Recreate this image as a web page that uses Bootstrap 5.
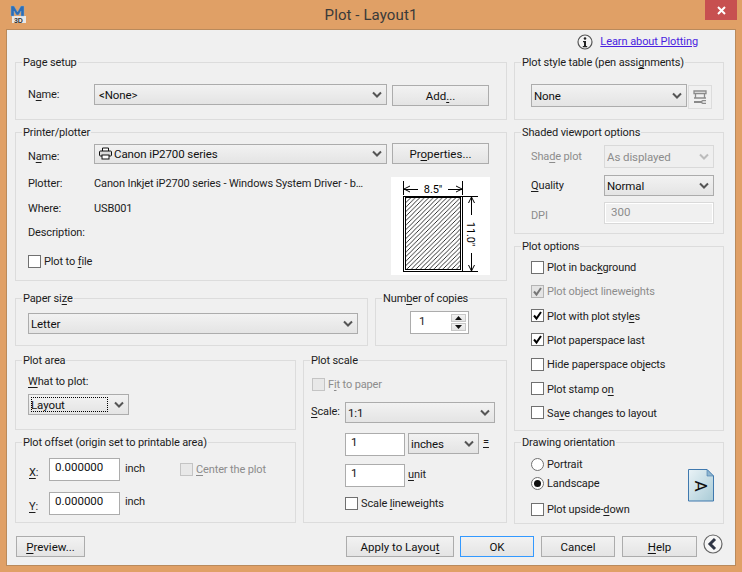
<!DOCTYPE html>
<html lang="en">
<head>
<meta charset="utf-8">
<title>Plot - Layout1</title>
<link href="https://cdn.jsdelivr.net/npm/bootstrap@5.3.0/dist/css/bootstrap.min.css" rel="stylesheet">
<style>
html,body{margin:0;height:572px;overflow:hidden}
body{width:742px;background:#E0A066;font:11px/16px Roboto,"Liberation Sans",sans-serif;letter-spacing:-.13px;color:#1c1c1c}
u{text-underline-offset:2px}
.wtitle{height:29px}
.wlogo{width:37px;padding:5px 0 0 10px}
.wname{font-size:15px;line-height:30px;color:#3a3a3a;letter-spacing:.1px}
.wclose{width:32px;height:20px;background:#C75050;margin-right:5px}
.dlg{margin-left:6px;width:730px;height:537px;background:#F0F0F0;border:1px solid #B98A5C;overflow:hidden}
.lnkrow{height:24px;padding-right:37px;gap:7px}
.lnk{color:#4A1FE0;text-decoration:underline;letter-spacing:-.07px}
.cols{padding-left:8px;gap:7px}
.wleft{width:492px}
.wright{width:210px}
fieldset.grp{border:1px solid #DCDCDC;min-width:0;padding:0 0 0 12px}
.grp legend{float:none;width:auto;font-size:11px;height:16px;line-height:18px;padding:0 1px;margin:0 0 0 -6px;letter-spacing:-.13px}
.lab{flex:none}
.sel{height:21px;font-size:11.5px;line-height:16px;padding:0 0 0 2px;letter-spacing:-.1px;border-radius:0;border:1px solid #ACACAC;color:#111;background:url("data:image/svg+xml,%3Csvg xmlns='http://www.w3.org/2000/svg' viewBox='0 0 10 8'%3E%3Cpath d='M1 1.500l4 4 4-4' fill='none' stroke='%23555' stroke-width='2'/%3E%3C/svg%3E") right 4px center/10px 8px no-repeat,linear-gradient(#F2F2F2,#E4E4E4)}
.sel:disabled{background:url("data:image/svg+xml,%3Csvg xmlns='http://www.w3.org/2000/svg' viewBox='0 0 10 8'%3E%3Cpath d='M1 1.500l4 4 4-4' fill='none' stroke='%23bbb' stroke-width='2'/%3E%3C/svg%3E") right 4px center/10px 8px no-repeat,#EFEFEF;border-color:#D9D9D9;color:#8C8C8C}
.txt{height:23px;font-size:11.5px;line-height:16px;padding:0 0 5px 5px;border-radius:0;border:1px solid #ACACAC;color:#111;background:#fff}
.txt:disabled{background:#F0F0F0;border:2px solid #fff;outline:1px solid #D9D9D9;outline-offset:-1px;color:#8C8C8C;opacity:1;padding-bottom:3px}
.wbtn{height:21px;font-size:11.5px;line-height:16px;padding:0;border-radius:0;border:1px solid #ACACAC;color:#111;background:linear-gradient(#F2F2F2,#E4E4E4)}
.wbtn-ok{border-color:#3399FF}
.dim{color:#8C8C8C}
.chk{height:16px;gap:3px}
.chk .form-check-input{width:13px;height:13px;margin:0;border:1px solid #707070;border-radius:0;background-color:#fff;flex:none;opacity:1}
.chk .form-check-input:checked[type=checkbox]{background-color:#fff;border-color:#707070;background-size:11px;background-image:url("data:image/svg+xml,%3Csvg xmlns='http://www.w3.org/2000/svg' viewBox='0 0 11 11'%3E%3Cpath d='M2 5.500l2.500 3L9 2' fill='none' stroke='%23000' stroke-width='2'/%3E%3C/svg%3E")}
.chk .form-check-input:disabled{border-color:#C4C4C4;background-color:#E8E8E8}
.chk .form-check-input:checked:disabled[type=checkbox]{border-color:#B4B4B4;background-color:#E4E4E4;background-image:url("data:image/svg+xml,%3Csvg xmlns='http://www.w3.org/2000/svg' viewBox='0 0 11 11'%3E%3Cpath d='M2 5.500l2.500 3L9 2' fill='none' stroke='%23777' stroke-width='2'/%3E%3C/svg%3E")}
.chk .form-check-input[type=radio]{border-radius:50%}
.chk .form-check-input:checked[type=radio]{background-color:#fff;border-color:#707070;background-size:13px;background-image:url("data:image/svg+xml,%3Csvg xmlns='http://www.w3.org/2000/svg' viewBox='0 0 13 13'%3E%3Ccircle cx='6.500' cy='6.500' r='3.500' fill='%23111'/%3E%3C/svg%3E")}
.chk .form-check-label{opacity:1!important;height:16px;line-height:18px}
.h-ps{height:66px}.h-pr{height:157px}.h-pa{height:56px}.h-ar{height:78px}.h-of{height:89px}.h-sc{height:171px}.h-sh{height:110px}.h-op{height:193px}.h-or{height:90px}
.dl{position:absolute;left:3px;top:3px;width:77px;height:15px;border:1px dotted #000;pointer-events:none}
.spin{width:59px;height:23px;border:1px solid #ACACAC;background:#fff;padding:1px 1px 2px 8px;margin-left:34px;font-size:11.5px}
.spbtn{width:15px;height:9px;background:linear-gradient(#F2F2F2,#E4E4E4);border:1px solid #C8C8C8}
.spcol{margin:1px 1px 0 0}
.ptico{position:absolute;left:5px;top:3px}
.tool{width:24px;height:24px;border:1px solid #DCDCDC;margin-top:1px}
.pvw{width:99px;height:98px;flex:none;background:#fff}
.bar{padding:12px 12px 0 9px}
.mt-1p{margin-top:1px}.mt-3p{margin-top:3px}.mt-4p{margin-top:4px}.mt-5p{margin-top:5px}.mt-6p{margin-top:6px}.mt-7p{margin-top:7px}.mt-8p{margin-top:8px}.mt-9p{margin-top:9px}.mt-10p{margin-top:10px}.mt-11p{margin-top:11px}.mt-12p{margin-top:12px}.mt-13p{margin-top:13px}.mt-14p{margin-top:14px}
</style>
</head>
<body>
<header class="wtitle d-flex">
  <div class="wlogo">
    <svg width="17" height="18" viewBox="0 0 17 18"><rect x="2" y="11" width="14" height="7" fill="#E8E8E8"/><path d="M1 11V1h3l3.500 6L11 1h3v10h-3V6L8.500 10h-2L4 6v5z" fill="#2E6DB4" stroke="#7FB0DC" stroke-width=".4"/><text x="4" y="17.500" font-size="7" font-weight="700" fill="#333" font-family="Liberation Sans">3D</text></svg>
  </div>
  <div class="wname flex-grow-1 text-center">Plot - Layout1</div>
  <div class="wclose d-flex align-items-center justify-content-center">
    <svg width="9" height="9" viewBox="0 0 9 9"><path d="M1 1l7 7M8 1L1 8" stroke="#fff" stroke-width="2"/></svg>
  </div>
</header>
<main class="dlg">
  <div class="lnkrow d-flex justify-content-end align-items-center">
    <svg width="16" height="16" viewBox="0 0 16 16"><circle cx="8" cy="8" r="7" fill="#F4F4F4" stroke="#555" stroke-width="1.200"/><circle cx="8" cy="4.500" r="1.300" fill="#222"/><path d="M6 7h3v5h1.200v1.200H5.800V12H7V8.200H6z" fill="#222"/></svg>
    <a class="lnk" href="#">Learn about Plotting</a>
  </div>
  <div class="cols d-flex">
    <div class="wleft">
      <fieldset class="grp h-ps">
        <legend>Page setup</legend>
        <div class="d-flex mt-14p">
          <div class="lab" style="width:66px;padding-top:3px">N<u>a</u>me:</div>
          <select class="form-select sel" style="width:293px;padding-left:4px"><option>&lt;None&gt;</option></select>
          <button class="btn wbtn ms-auto mt-1p" style="width:97px;margin-right:17px;flex:none">Add<u>.</u>..</button>
        </div>
      </fieldset>
      <fieldset class="grp h-pr mt-4p">
        <legend>Printer/plotter</legend>
        <div class="d-flex mt-3p">
          <div class="lab" style="width:66px;padding-top:6px">N<u>a</u>me:</div>
          <div class="position-relative mt-1p" style="width:293px;flex:none">
            <select class="form-select sel" style="height:20px;padding-left:19px"><option>Canon iP2700 series</option></select>
            <svg class="ptico" width="13" height="13" viewBox="0 0 13 13"><path d="M3.500 4V1h6v3" fill="#fff" stroke="#111"/><rect x=".5" y="4" width="12" height="5" rx="1" fill="#ddd" stroke="#111"/><rect x="3" y="8" width="7" height="4" fill="#fff" stroke="#111"/></svg>
          </div>
          <button class="btn wbtn" style="width:97px;margin-left:5px;flex:none">Pr<u>o</u>perties...</button>
        </div>
        <div class="d-flex mt-11p">
          <div style="width:350px;flex:none">
            <div class="d-flex"><div class="lab" style="width:66px">Plotter:</div><div class="text-nowrap">Canon Inkjet iP2700 series - Windows System Driver - b…</div></div>
            <div class="d-flex mt-9p"><div class="lab" style="width:66px">Where:</div><div>USB001</div></div>
            <div class="mt-8p">Description:</div>
            <div class="chk d-flex align-items-center mt-12p"><input class="form-check-input" type="checkbox" id="c0"><label class="form-check-label" for="c0">Plot to <u>f</u>ile</label></div>
          </div>
          <svg class="pvw mt-1p" viewBox="0 0 99 98" style="margin-left:13px" shape-rendering="crispEdges">
            <defs><pattern id="hatch" width="4.500" height="4.500" patternUnits="userSpaceOnUse"><path d="M0 4.500L4.500 0" stroke="#000" stroke-width=".8" shape-rendering="auto"/></pattern></defs>
            <rect x="12.500" y="19.500" width="59" height="75" fill="#fff" stroke="#000"/>
            <rect x="14.500" y="20.500" width="55" height="72" fill="url(#hatch)" stroke="#000"/>
            <path d="M12.500 4v14M71.500 4v14M13 12h14M57 12h14M71 19.500h16M71 94.500h16M80.500 20v18M80.500 76v18" fill="none" stroke="#000"/>
            <path d="M13 12l6-3M13 12l6 3M71 12l-6-3M71 12l-6 3M80.500 20l-3 6M80.500 20l3 6M80.500 94l-3-6M80.500 94l3-6" fill="none" stroke="#000" shape-rendering="auto"/>
            <text x="42" y="16" text-anchor="middle" font-size="11" fill="#000" font-family="Roboto">8.5″</text>
            <text transform="translate(76 57) rotate(90)" text-anchor="middle" font-size="11" fill="#000" font-family="Roboto">11.0″</text>
          </svg>
        </div>
      </fieldset>
      <div class="d-flex mt-9p" style="gap:7px">
        <fieldset class="grp h-pa" style="width:353px">
          <legend>Paper si<u>z</u>e</legend>
          <select class="form-select sel mt-7p" style="width:330px"><option>Letter</option></select>
        </fieldset>
        <fieldset class="grp h-pa ps-0" style="width:132px">
          <legend style="margin-left:6px">Num<u>b</u>er of copies</legend>
          <div class="spin d-flex justify-content-between mt-5p">
            <span>1</span>
            <div class="spcol d-flex flex-column gap-0">
              <div class="spbtn d-flex align-items-center justify-content-center"><svg width="7" height="4" viewBox="0 0 7 4"><path d="M3.500 0L7 4H0z" fill="#111"/></svg></div>
              <div class="spbtn d-flex align-items-center justify-content-center mt-1p"><svg width="7" height="4" viewBox="0 0 7 4"><path d="M3.500 4L7 0H0z" fill="#111"/></svg></div>
            </div>
          </div>
        </fieldset>
      </div>
      <div class="d-flex mt-6p" style="gap:7px">
        <div style="width:281px">
          <fieldset class="grp h-ar">
            <legend>Plot area</legend>
            <div class="mt-6p"><u>W</u>hat to plot:</div>
            <div class="position-relative mt-4p" style="width:101px">
              <select class="form-select sel"><option>Layout</option></select>
              <span class="dl"></span>
            </div>
          </fieldset>
          <fieldset class="grp h-of mt-4p">
            <legend>Plot offset (origin set to printable area)</legend>
            <div class="d-flex mt-7p align-items-center">
              <div class="lab" style="width:21px;padding:8px 0 0 1px"><u>X</u>:</div>
              <input class="form-control txt" style="width:71px" value="0.000000">
              <div class="lab" style="width:55px;margin-left:5px">inch</div>
              <div class="chk d-flex align-items-center dim"><input class="form-check-input" type="checkbox" disabled id="c1"><label class="form-check-label" for="c1"><u>C</u>enter the plot</label></div>
            </div>
            <div class="d-flex mt-10p align-items-center">
              <div class="lab" style="width:21px;padding:8px 0 0 1px"><u>Y</u>:</div>
              <input class="form-control txt" style="width:71px" value="0.000000">
              <div class="lab" style="margin-left:5px;padding-bottom:2px">inch</div>
            </div>
          </fieldset>
        </div>
        <fieldset class="grp h-sc" style="width:204px;padding-left:7px">
          <legend style="margin-left:-1px">Plot scale</legend>
          <div class="chk d-flex align-items-center dim mt-8p" style="margin-left:1px"><input class="form-check-input" type="checkbox" disabled id="c2"><label class="form-check-label" for="c2">F<u>i</u>t to paper</label></div>
          <div class="d-flex mt-10p">
            <div class="lab" style="width:34px;padding-top:2px"><u>S</u>cale:</div>
            <select class="form-select sel" style="width:150px"><option>1:1</option></select>
          </div>
          <div class="d-flex mt-10p" style="padding-left:34px">
            <input class="form-control txt" style="width:60px" value="1">
            <select class="form-select sel" style="width:71px;margin-left:3px"><option>inches</option></select>
            <div style="margin-left:4px;width:9px;padding-top:1px"><u>=</u></div>
          </div>
          <div class="d-flex mt-8p" style="padding-left:34px">
            <input class="form-control txt" style="width:60px" value="1">
            <div style="margin-left:3px;padding-top:3px"><u>u</u>nit</div>
          </div>
          <div class="chk d-flex align-items-center mt-8p" style="margin-left:34px"><input class="form-check-input" type="checkbox" id="c3"><label class="form-check-label" for="c3">Scale <u>l</u>ineweights</label></div>
        </fieldset>
      </div>
    </div>
    <div class="wright">
      <fieldset class="grp h-ps" style="padding-left:16px">
        <legend style="margin-left:-10px">Plot style table (pen assi<u>g</u>nments)</legend>
        <div class="d-flex mt-14p" style="gap:1px">
          <select class="form-select sel" style="width:156px;height:23px"><option>None</option></select>
          <div class="tool d-flex align-items-center justify-content-center flex-none">
            <svg width="14" height="15" viewBox="0 0 14 15"><path d="M1 1h12v2.500H1zM2.500 3.500v5M11.500 3.500v5M1 8h12" fill="none" stroke="#8A8A8A" stroke-width="1.300"/><path d="M1 11h7l1.500-1H13v1.200H10l-1 .8 1 .8h3V14H9.500L8 13H1z" fill="#8A8A8A"/></svg>
          </div>
        </div>
      </fieldset>
      <fieldset class="grp h-sh mt-4p" style="padding-left:16px">
        <legend style="margin-left:-10px">Shaded viewport options</legend>
        <div class="d-flex mt-5p align-items-center">
          <div class="lab dim" style="width:73px">Sha<u>d</u>e plot</div>
          <select class="form-select sel" disabled style="width:110px;height:23px"><option>As displayed</option></select>
        </div>
        <div class="d-flex mt-7p align-items-center">
          <div class="lab" style="width:73px"><u>Q</u>uality</div>
          <select class="form-select sel" style="width:110px"><option>Normal</option></select>
        </div>
        <div class="d-flex mt-6p align-items-center">
          <div class="lab dim" style="width:73px;padding-top:6px">DPI</div>
          <input class="form-control txt" disabled style="width:110px;height:22px" value="300">
        </div>
      </fieldset>
      <fieldset class="grp h-op mt-4p" style="padding-left:16px">
        <legend style="margin-left:-10px">Plot options</legend>
        <div class="d-flex flex-column mt-5p" style="gap:8.33px">
          <div class="chk d-flex align-items-center"><input class="form-check-input" type="checkbox" id="o1"><label class="form-check-label" for="o1">Plot in bac<u>k</u>ground</label></div>
          <div class="chk d-flex align-items-center dim"><input class="form-check-input" type="checkbox" checked disabled id="o2"><label class="form-check-label" for="o2">Plot object lineweights</label></div>
          <div class="chk d-flex align-items-center"><input class="form-check-input" type="checkbox" checked id="o3"><label class="form-check-label" for="o3">Plot with plot styl<u>e</u>s</label></div>
          <div class="chk d-flex align-items-center"><input class="form-check-input" type="checkbox" checked id="o4"><label class="form-check-label" for="o4">Plot paperspace last</label></div>
          <div class="chk d-flex align-items-center"><input class="form-check-input" type="checkbox" id="o5"><label class="form-check-label" for="o5">Hide paperspace ob<u>j</u>ects</label></div>
          <div class="chk d-flex align-items-center"><input class="form-check-input" type="checkbox" id="o6"><label class="form-check-label" for="o6">Plot stamp o<u>n</u></label></div>
          <div class="chk d-flex align-items-center"><input class="form-check-input" type="checkbox" id="o7"><label class="form-check-label" for="o7">Sa<u>v</u>e changes to layout</label></div>
        </div>
      </fieldset>
      <fieldset class="grp h-or mt-3p" style="padding-left:16px">
        <legend style="margin-left:-10px">Drawing orientation</legend>
        <div class="d-flex">
          <div style="width:157px;flex:none">
            <div class="chk d-flex align-items-center mt-6p"><input class="form-check-input" type="radio" name="r" id="r1"><label class="form-check-label" for="r1">Portrait</label></div>
            <div class="chk d-flex align-items-center mt-3p"><input class="form-check-input" type="radio" name="r" id="r2" checked><label class="form-check-label" for="r2">Landscape</label></div>
            <div class="chk d-flex align-items-center mt-10p"><input class="form-check-input" type="checkbox" id="r3"><label class="form-check-label" for="r3">Plot upside-<u>d</u>own</label></div>
          </div>
          <svg width="26" height="33" viewBox="0 0 26 33" class="flex-none" style="margin-top:19px">
            <defs><linearGradient id="pg" x1="0" y1="0" x2="1" y2="1"><stop offset="0" stop-color="#EAF3F7"/><stop offset="1" stop-color="#A9CBD6"/></linearGradient></defs>
            <path d="M.5.500H19L25.500 7v25H.5z" fill="url(#pg)" stroke="#3F78AE"/><path d="M19 .5V7h6.500z" fill="#8FB6CF" stroke="#3F78AE" stroke-width=".6"/>
            <text transform="translate(7 17) rotate(90)" text-anchor="middle" font-size="17" fill="#111" font-family="Roboto">A</text>
          </svg>
        </div>
      </fieldset>
    </div>
  </div>
  <div class="bar d-flex align-items-start">
    <button class="btn wbtn" style="width:69px"><u>P</u>review...</button>
    <button class="btn wbtn ms-auto" style="width:108px">Apply to Layou<u>t</u></button>
    <button class="btn wbtn wbtn-ok" style="width:74px;margin-left:6px">OK</button>
    <button class="btn wbtn" style="width:74px;margin-left:7px">Cancel</button>
    <button class="btn wbtn" style="width:75px;margin-left:7px"><u>H</u>elp</button>
    <svg width="20" height="20" viewBox="0 0 20 20" style="margin-left:6px;margin-top:-2px;flex:none"><circle cx="10" cy="10" r="9" fill="#F6F6F6" stroke="#666" stroke-width="1.200"/><path d="M12 5L7 10l5 5" fill="none" stroke="#2F3545" stroke-width="3"/></svg>
  </div>
</main>
</body>
</html>
